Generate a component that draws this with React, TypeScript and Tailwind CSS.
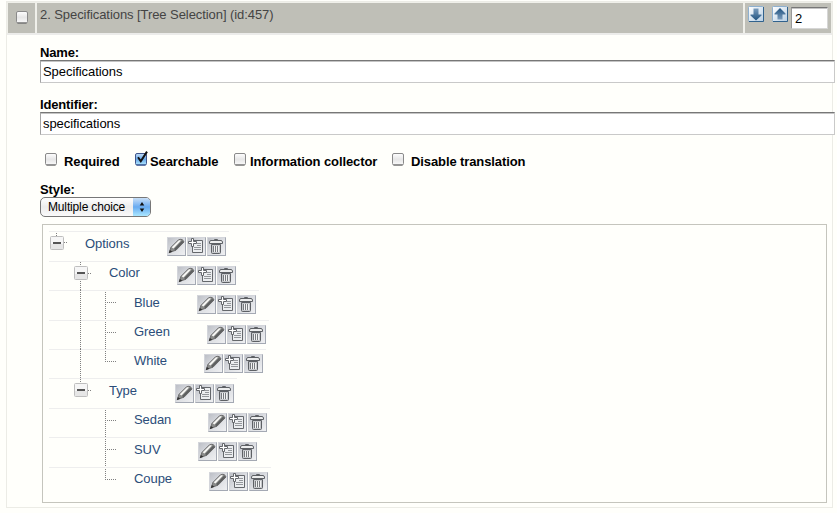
import type { ReactNode } from 'react';

type Node = {
  label: string;
  depth: number;
  height: number;
  line: number;
  icons: number;
  iconTop: number;
  labelTop: number;
  rootLine?: boolean;
  last?: boolean;
};

const nodes: Node[] = [
  { label: 'Options', depth: 0, height: 30, line: 180, icons: 118, iconTop: 5, labelTop: 4 },
  { label: 'Color', depth: 1, height: 29, line: 191, icons: 128, iconTop: 4, labelTop: 3, rootLine: true },
  { label: 'Blue', depth: 2, height: 30, line: 210, icons: 148, iconTop: 4, labelTop: 4, rootLine: true },
  { label: 'Green', depth: 2, height: 29, line: 220, icons: 158, iconTop: 4, labelTop: 3, rootLine: true },
  { label: 'White', depth: 2, height: 29, line: 217, icons: 155, iconTop: 4, labelTop: 3, rootLine: true, last: true },
  { label: 'Type', depth: 1, height: 30, line: 188, icons: 126, iconTop: 5, labelTop: 4 },
  { label: 'Sedan', depth: 2, height: 29, line: 221, icons: 159, iconTop: 4, labelTop: 3 },
  { label: 'SUV', depth: 2, height: 30, line: 211, icons: 149, iconTop: 4, labelTop: 4 },
  { label: 'Coupe', depth: 2, height: 29, line: 222, icons: 160, iconTop: 4, labelTop: 3, last: true },
];

function IconButton({ children }: { children: ReactNode }) {
  return (
    <button className="block h-[19px] w-[19px] border border-[#a4a9b3] border-t-[#d3d5da] border-l-[#d3d5da] bg-linear-to-br from-[#bcbfc6] via-[#dcdee2] to-[#eff0f2]">
      <svg className="block" width="17" height="17" viewBox="0 0 17 17">
        {children}
      </svg>
    </button>
  );
}

function Actions() {
  return (
    <div className="flex gap-px">
      <IconButton>
        <path d="M1.2 14.5 3 9.3 10.5 1.8Q14.8.2 16 4L8 12.2Z" fill="#8b8c8b" />
        <path d="M3.5 9.2 10.8 1.9 13 2.6 5.5 10.6Z" fill="#f7f7f4" />
        <path d="M6.8 11.6 14.8 3.4" stroke="#5c5e5e" strokeWidth="2" />
        <path d="M1.2 14.5 3 9.3 10.5 1.8Q14.8.2 16 4L8 12.2Z" fill="none" stroke="#5a5b5b" strokeWidth=".8" />
        <path d="M.8 15.2 1.9 11.9 4.4 13.8Z" fill="#333" />
      </IconButton>
      <IconButton>
        <path d="M4.5 2.5h10v12h-10z" fill="#eceef0" stroke="#64676b" />
        <path d="M9 5.5h4M9 7.5h4M6 9.5h7M6 11.5h7" stroke="#94979b" />
        <path d="M3.5.5h2v3h3v2h-3v3h-2v-3h-3v-2h3z" fill="#fff" stroke="#64676b" />
      </IconButton>
      <IconButton>
        <path d="M3.5 6.5h9v8q0 1-1 1h-7q-1 0-1-1z" fill="#c6c8cb" stroke="#5d6064" />
        <path d="M5.5 8v6M7.5 8v6M9.5 8v6" stroke="#777a7e" />
        <path d="M6.5 8v6M8.5 8v6M10.5 8v6" stroke="#f1f2f2" />
        <path d="M6.5 2.5v-1h3v1" fill="none" stroke="#5d6064" />
        <path d="M1.5 5.5v-1.5q.3-1.5 1.5-1.5h10q1.2 0 1.5 1.5v1.5z" fill="#eceded" stroke="#5d6064" />
      </IconButton>
    </div>
  );
}

function Toggle() {
  return (
    <svg className="block" width="14" height="14" viewBox="0 0 14 14">
      <rect x=".5" y=".5" width="13" height="13" rx="1" fill="#f6f6f6" stroke="#bebebe" />
      <path d="M1 8h12v5H1z" fill="#e6e6e6" />
      <path d="M3 7h8" stroke="#555" strokeWidth="2" />
    </svg>
  );
}

/* Dotted guides that join a node to its parent and siblings. */
function Guides({ node }: { node: Node }) {
  const { depth, height: h, rootLine, last } = node;
  const width = depth === 2 ? 68 : 44;
  return (
    <svg className="block" width={width} height={h} viewBox={`0 0 ${width} ${h}`} fill="none" stroke="#808080" strokeDasharray="1 1">
      {depth === 0 && <path d="M7.5 2v4M15 11.5h4" />}
      {depth === 1 && <path d="M31.5 1v4M39 12.5h4" />}
      {depth === 1 && rootLine && <path d={`M31.5 20V${h}`} />}
      {depth === 2 && rootLine && <path d={`M31.5 0V${h}`} />}
      {depth === 2 && <path d={`M56.5 2V${last ? 12 : h}M56 12.5h12`} />}
    </svg>
  );
}

function Row({ node }: { node: Node }) {
  const labelLeft = [36, 60, 85][node.depth];
  const guideWidth = node.depth === 2 ? 68 : 44;
  const toggleLeft = node.depth === 0 ? 1 : 25;
  return (
    <li className="flex" style={{ height: node.height }}>
      <div className="relative shrink-0" style={{ width: guideWidth, marginRight: labelLeft - guideWidth }}>
        <Guides node={node} />
        {node.depth < 2 && (
          <div className="absolute top-[5px]" style={{ left: toggleLeft }}>
            <Toggle />
          </div>
        )}
      </div>
      <div className="flex border-t border-[#eeeeee]" style={{ marginLeft: -labelLeft, paddingLeft: labelLeft, width: node.line }}>
        <span className="shrink-0 text-[13px] leading-4 whitespace-nowrap text-[#2b4d79]" style={{ width: node.icons - labelLeft, paddingTop: node.labelTop }}>
          {node.label}
        </span>
        <div style={{ paddingTop: node.iconTop }}>
          <Actions />
        </div>
      </div>
    </li>
  );
}

function Box({ checked = false }: { checked?: boolean }) {
  return (
    <svg className="block shrink-0 overflow-visible" width="13" height="13" viewBox="0 0 13 13">
      <defs>
        <linearGradient id="plain" x1="0" y1="0" x2="0" y2="1">
          <stop offset="0" stopColor="#fff" />
          <stop offset=".5" stopColor="#e6e6e6" />
          <stop offset="1" stopColor="#fafafa" />
        </linearGradient>
        <linearGradient id="aqua" x1="0" y1="0" x2="0" y2="1">
          <stop offset="0" stopColor="#c5def6" />
          <stop offset=".5" stopColor="#69a9e9" />
          <stop offset="1" stopColor="#b4eaff" />
        </linearGradient>
      </defs>
      <rect x=".5" y=".5" width="11" height="11.5" rx="1.5" fill={checked ? 'url(#aqua)' : 'url(#plain)'} stroke={checked ? '#40558a' : '#8a8a8a'} />
      <path d="M1.5 12h9" stroke={checked ? '#24478a' : '#666'} />
      {checked && <path d="M3 4.2 5.8 8.2 12-1.4" fill="none" stroke="#111" strokeWidth="2" />}
    </svg>
  );
}

function Arrow({ up = false }: { up?: boolean }) {
  return (
    <svg className="block" width="16" height="16" viewBox="0 0 16 16">
      <defs>
        <linearGradient id="arrowBg" x1="0" y1="0" x2="1" y2="1">
          <stop offset="0" stopColor="#fff" />
          <stop offset="1" stopColor="#b7cfe4" />
        </linearGradient>
        <linearGradient id="arrowInk" x1="0" y1="0" x2="0" y2="1">
          <stop offset="0" stopColor="#7a9cbd" />
          <stop offset="1" stopColor="#1f527f" />
        </linearGradient>
        <linearGradient id="arrowInkUp" x1="0" y1="0" x2="0" y2="1">
          <stop offset="0" stopColor="#1f527f" />
          <stop offset="1" stopColor="#7a9cbd" />
        </linearGradient>
      </defs>
      <rect x=".5" y=".5" width="15" height="15" rx="1" fill="url(#arrowBg)" stroke="#8eb0cf" />
      <path d="M1 15.5h14.5V1" fill="none" stroke="#31628d" />
      {up ? <path d="M8 2 13.5 7.5V8.5H10.5V13.5H5.5V8.5H2.5V7.5Z" fill="url(#arrowInkUp)" /> : <path d="M5.5 2.5h5v6h3v1L8 14.5 2.5 9.5v-1h3z" fill="url(#arrowInk)" />}
    </svg>
  );
}

function Field({ label, value }: { label: string; value: string }) {
  return (
    <label className="block">
      <span className="block h-4 text-[13px] leading-[17px] font-bold tracking-[-0.15px]">{label}</span>
      <input
        className="block h-[23px] w-[795px] border border-[#c9c9c9] border-t-[#777] border-l-[#a4a4a4] bg-white px-[2px] text-[13px] leading-4 tracking-[-0.06px] text-black shadow-[inset_0_1px_0_#c4c4c4] outline-none"
        defaultValue={value}
      />
    </label>
  );
}

export default function App() {
  return (
    <div className="h-[513px] w-[837px] overflow-hidden bg-[#fffffb] pt-px pl-1.5 font-['Liberation_Sans',Arial,sans-serif] text-[13px] text-black">
      <div className="h-[507px] w-[827px] border border-[#ecece6]">
        <header className="flex h-[33px] gap-[2px] border-b-2 border-[#ececea] bg-[#f0f0ea] pt-px pr-px pl-px">
          <div className="w-[27px] bg-[#bfbfb7] pt-2 pl-2">
            <Box />
          </div>
          <h1 className="w-[706px] bg-[#bfbfb7] pt-1 pl-[3px] text-[13px] leading-4 tracking-[-0.07px] text-[#444]">2. Specifications [Tree Selection] (id:457)</h1>
          <div className="flex flex-1 bg-[#bfbfb7] pt-[3px] pl-[3px]">
            <Arrow />
            <div className="ml-2">
              <Arrow up />
            </div>
            <input
              className="mt-px ml-[3px] h-[22px] w-[37px] border border-[#d6d6d6] border-t-[#777] border-l-[#999] bg-white px-[3px] text-[13px] shadow-[inset_0_1px_0_#c4c4c4] outline-none"
              defaultValue="2"
            />
          </div>
        </header>
        <main className="pt-[9px] pl-[33px]">
          <Field label="Name:" value="Specifications" />
          <div className="mt-[13px]">
            <Field label="Identifier:" value="specifications" />
          </div>
          <div className="mt-[18px] flex h-4 pl-[5px] leading-[18px] font-bold tracking-[-0.1px]">
            <Box />
            <span className="ml-[6px] w-[71px]">Required</span>
            <Box checked />
            <span className="ml-[2px] w-[84px]">Searchable</span>
            <Box />
            <span className="ml-[3px] w-[142px]">Information collector</span>
            <Box />
            <span className="ml-[6px]">Disable translation</span>
          </div>
          <div className="mt-3 h-4 leading-[17px] font-bold tracking-[-0.1px]">Style:</div>
          <div className="flex h-5 w-[111px] overflow-hidden rounded-[5px] border border-[#777] bg-linear-to-b from-white via-[#ececec] to-[#fafafa]">
            <span className="w-[92px] pl-[7px] text-[12px] leading-[18px] tracking-[-0.15px] whitespace-nowrap">Multiple choice</span>
            <span className="flex flex-1 items-center justify-center bg-linear-to-b from-[#c8dff7] via-[#67aaf0] to-[#abe8ff]">
              <svg width="6" height="12" viewBox="0 0 6 12">
                <path d="M3 1 5.3 4.5H.7ZM3 11 .7 7.5h4.6Z" fill="#111" />
              </svg>
            </span>
          </div>
          <ul className="mt-[7px] ml-[2px] h-[279px] w-[785px] border border-[#c5c5bd] pt-[6px] pl-[6px] tracking-[-0.06px]">
            {nodes.map((n) => (
              <Row key={n.label} node={n} />
            ))}
          </ul>
        </main>
      </div>
    </div>
  );
}
